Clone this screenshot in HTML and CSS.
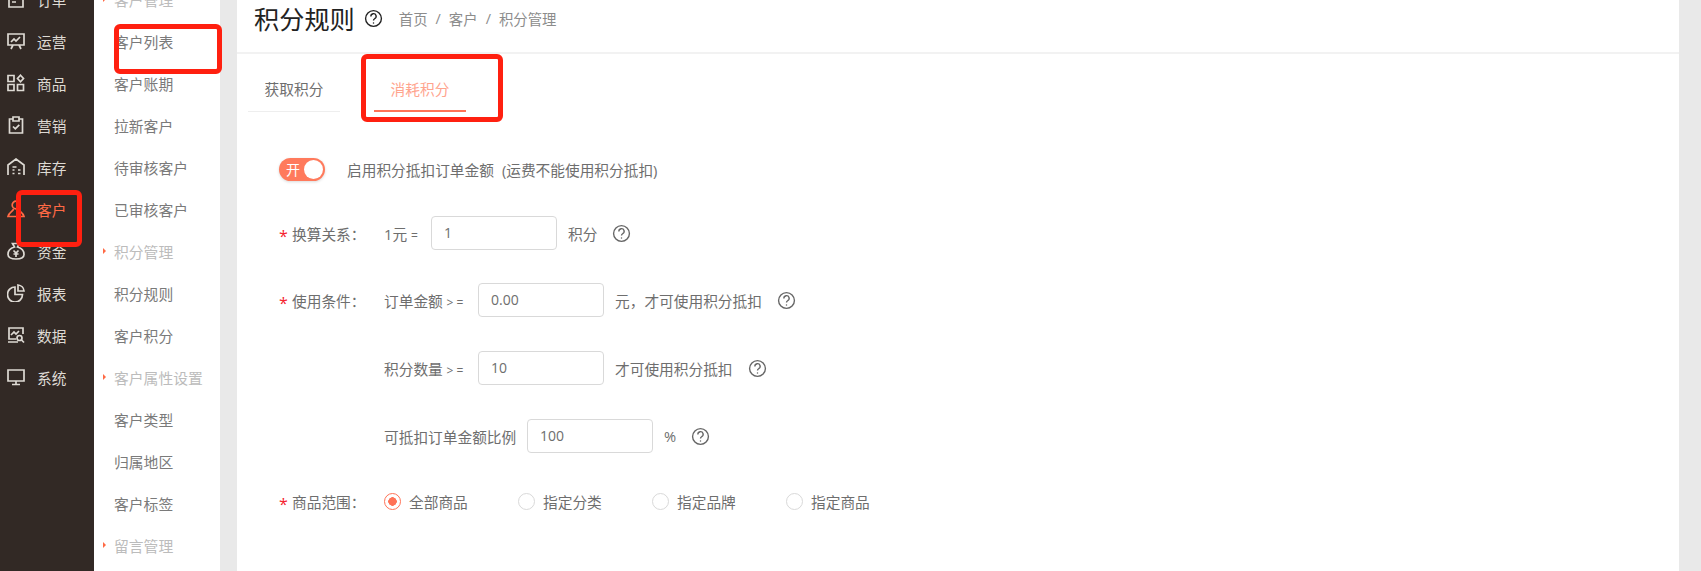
FILE: index.html
```html
<!DOCTYPE html>
<html lang="zh">
<head>
<meta charset="utf-8">
<title>积分规则</title>
<link rel="stylesheet" href="styles.css">
</head>
<body>
<div class="app">
  <nav class="rail">
    <a class="rail-item"><svg class="ri" viewBox="0 0 18 18"><path d="M2 1h12l2 2v14H2zM5 6h8M5 9h8M5 12h4"/></svg><span>订单</span></a>
    <a class="rail-item"><svg class="ri" viewBox="0 0 18 18"><path d="M1 2h16v11H1zM4 10l3-3 2 2 4-4M6 13l-2 4M12 13l2 4"/></svg><span>运营</span></a>
    <a class="rail-item"><svg class="ri" viewBox="0 0 18 18"><path d="M1 1.500h6v6H1zM1 10.500h6v6H1zM10.500 10.500h6v6h-6zM13.500 1.200l3 3.300-3 3.300-3-3.300z"/></svg><span>商品</span></a>
    <a class="rail-item"><svg class="ri" viewBox="0 0 18 18"><path d="M6 3H2.500v14h13V3H12M6 1h6v4H6zM6 10.500l2.300 2.300 4-4"/></svg><span>营销</span></a>
    <a class="rail-item"><svg class="ri" viewBox="0 0 18 18"><path d="M1 17V7l8-6 8 6v10M5.500 9h4M5.500 12h2M5.500 15.500h2M11 12h2.500M11 15.500h2.500"/></svg><span>库存</span></a>
    <a class="rail-item is-active"><svg class="ri" viewBox="0 0 18 18"><circle cx="9" cy="5" r="3.800"/><path d="M6.500 9C6 11.500 2 12 1 16.500h16C16 12 12 11.500 11.500 9"/></svg><span>客户</span></a>
    <a class="rail-item"><svg class="ri" viewBox="0 0 18 18"><path d="M5.500 1.500h7l-2 3.500c4 1 6.500 4 6.500 7.500 0 3-3 4.500-8 4.500s-8-1.500-8-4.500C1 9 3.500 6 7.500 5zM6.500 8.500L9 11l2.500-2.500M9 11v4M6.500 12h5"/></svg><span>资金</span></a>
    <a class="rail-item"><svg class="ri" viewBox="0 0 18 18"><path d="M8 3a7.500 7.500 0 1 0 7.500 7.500H8zM11 1a6.500 6.500 0 0 1 6 6h-6z"/></svg><span>报表</span></a>
    <a class="rail-item"><svg class="ri" viewBox="0 0 18 18"><path d="M16 8V2H2v11h7M1 16h10M4 9l3-3 2 2 3-3"/><circle cx="12.500" cy="12" r="2.500"/><path d="M14.500 14l2.500 2.500"/></svg><span>数据</span></a>
    <a class="rail-item"><svg class="ri" viewBox="0 0 18 18"><path d="M1 2h16v11H1zM9 13v3M5 16.500h8"/></svg><span>系统</span></a>
  </nav>

  <aside class="sub">
    <div class="sub-head">客户管理</div>
    <a class="sub-item">客户列表</a>
    <a class="sub-item">客户账期</a>
    <a class="sub-item">拉新客户</a>
    <a class="sub-item">待审核客户</a>
    <a class="sub-item">已审核客户</a>
    <div class="sub-head">积分管理</div>
    <a class="sub-item">积分规则</a>
    <a class="sub-item">客户积分</a>
    <div class="sub-head">客户属性设置</div>
    <a class="sub-item">客户类型</a>
    <a class="sub-item">归属地区</a>
    <a class="sub-item">客户标签</a>
    <div class="sub-head">留言管理</div>
  </aside>

  <main class="panel">
    <header class="head">
      <h1 class="title">积分规则</h1>
      <svg class="help help-dark" viewBox="0 0 18 18"><circle cx="9" cy="9" r="7.500"/><path d="M6.500 7a2.500 2.500 0 1 1 3.600 2.200C9.300 9.700 9 10 9 11"/><circle class="dot" cx="9" cy="13.200" r="0.700"/></svg>
      <div class="crumbs"><span>首页</span><i>/</i><span>客户</span><i>/</i><span>积分管理</span></div>
    </header>

    <div class="tabs">
      <a class="tab">获取积分</a>
      <a class="tab is-on">消耗积分</a>
    </div>

    <form class="form">
      <div class="row row-toggle">
        <span class="switch"><b>开</b><i></i></span>
        <span class="switch-text">启用积分抵扣订单金额<span class="note">(运费不能使用积分抵扣)</span></span>
      </div>

      <div class="row row-rate">
        <label class="lbl"><em>*</em>换算关系：</label>
        <span class="pre pre-rate">1元 <small>=</small></span>
        <span class="input">1</span>
        <span class="post">积分</span>
        <svg class="help" viewBox="0 0 18 18"><circle cx="9" cy="9" r="7.500"/><path d="M6.500 7a2.500 2.500 0 1 1 3.600 2.200C9.300 9.700 9 10 9 11"/><circle class="dot" cx="9" cy="13.200" r="0.700"/></svg>
      </div>

      <div class="row row-use">
        <label class="lbl"><em>*</em>使用条件：</label>
        <span class="pre pre-cond">订单金额 <small>&gt; =</small></span>
        <span class="input">0.00</span>
        <span class="post">元，才可使用积分抵扣</span>
        <svg class="help" viewBox="0 0 18 18"><circle cx="9" cy="9" r="7.500"/><path d="M6.500 7a2.500 2.500 0 1 1 3.600 2.200C9.300 9.700 9 10 9 11"/><circle class="dot" cx="9" cy="13.200" r="0.700"/></svg>
      </div>

      <div class="row row-next">
        <span class="lbl"></span>
        <span class="pre pre-cond">积分数量 <small>&gt; =</small></span>
        <span class="input">10</span>
        <span class="post">才可使用积分抵扣</span>
        <svg class="help" viewBox="0 0 18 18"><circle cx="9" cy="9" r="7.500"/><path d="M6.500 7a2.500 2.500 0 1 1 3.600 2.200C9.300 9.700 9 10 9 11"/><circle class="dot" cx="9" cy="13.200" r="0.700"/></svg>
      </div>

      <div class="row row-next">
        <span class="lbl"></span>
        <span class="pre pre-ratio">可抵扣订单金额比例</span>
        <span class="input">100</span>
        <span class="post">%</span>
        <svg class="help" viewBox="0 0 18 18"><circle cx="9" cy="9" r="7.500"/><path d="M6.500 7a2.500 2.500 0 1 1 3.600 2.200C9.300 9.700 9 10 9 11"/><circle class="dot" cx="9" cy="13.200" r="0.700"/></svg>
      </div>

      <div class="row row-scope">
        <label class="lbl"><em>*</em>商品范围：</label>
        <span class="radio is-on"><i></i>全部商品</span>
        <span class="radio"><i></i>指定分类</span>
        <span class="radio"><i></i>指定品牌</span>
        <span class="radio"><i></i>指定商品</span>
      </div>
    </form>
  </main>
</div>

<div class="mark mark-list"></div>
<div class="mark mark-cust"></div>
<div class="mark mark-tab"></div>
</body>
</html>
```

FILE: styles.css
```css
* { box-sizing: border-box; }
html, body { margin: 0; height: 571px; overflow: hidden; }
body {
  background: #e9e9e9;
  font-family: "Open Sans", "Noto Sans CJK SC", sans-serif;
  font-size: 14.7px;
  color: #6e6e6e;
}
.app { display: flex; height: 571px; overflow: hidden; }

.rail { width: 94px; flex: none; background: #322925; }
.rail-item {
  display: flex; align-items: center; height: 42px; padding-left: 7px;
  color: #dedad4;
}
.rail-item:first-child { margin-top: -22px; }
.rail-item span { margin-left: 12px; }
.rail-item.is-active { color: #ff6a45; }
.ri { width: 18px; height: 18px; fill: none; stroke: currentColor; stroke-width: 1.7; flex: none; }

.sub { width: 126px; flex: none; background: #fff; font-size: 14.8px; }
.sub-item, .sub-head { display: flex; align-items: center; height: 42px; padding-left: 20px; }
.sub-item { color: #7a7a7a; }
.sub-head { color: #bcbcbc; position: relative; }
.sub-head:first-child { margin-top: -22px; }
.sub-head::before {
  content: ""; position: absolute; left: 9px; top: 18px;
  border-left: 3px solid #ff6a45; border-top: 3px solid transparent; border-bottom: 3px solid transparent;
}

.panel { width: 1442px; flex: none; margin-left: 17px; background: #fff; height: 571px; }
.head { display: flex; align-items: center; height: 54px; padding: 0 0 15px 17px; border-bottom: 2px solid #f2f2f2; }
.title { margin: 0; font-size: 25.2px; font-weight: 400; color: #222; line-height: 40px; }
.head .help { margin-left: 9px; }
.crumbs { margin-left: 16px; font-size: 14.4px; color: #8c8c8c; display: flex; align-items: center; }
.crumbs i { font-style: normal; margin: 0 8px; }

.help { width: 19px; height: 19px; fill: none; stroke: #666; stroke-width: 1.300; flex: none; }
.help-dark { stroke: #222; }
.help .dot { fill: #666; stroke: none; }
.help-dark .dot { fill: #222; }

.tabs { display: flex; padding-left: 11px; height: 58px; gap: 34px; }
.tab {
  width: 92px; height: 58px; display: flex; align-items: center; justify-content: center;
  padding-top: 12px; border-bottom: 1px solid #eee; color: #6e6e6e;
}
.tab.is-on { color: #ffa48e; border-bottom: 2px solid #ff7256; }

.form { padding-left: 42px; }
.row { display: flex; align-items: center; height: 34px; }
.row-toggle { margin-top: 40px; }
.row-rate { margin-top: 30px; }
.row-use { margin-top: 33px; }
.row-next { margin-top: 34px; }
.row-scope { margin-top: 31px; }

.switch {
  position: relative; width: 46px; height: 23px; border-radius: 12px; background: #ff7a5c;
  color: #fff; font-size: 14px; line-height: 23px; padding-left: 7px; box-shadow: 0 1px 3px rgba(0,0,0,.15);
}
.switch b { font-weight: 400; }
.switch i {
  position: absolute; right: 2px; top: 2px; width: 19px; height: 19px; border-radius: 50%; background: #fff;
}
.switch-text { margin-left: 22px; }
.note { margin-left: 8px; }

.lbl { width: 105px; flex: none; display: flex; align-items: center; }
.lbl em { color: #f5222d; font-style: normal; width: 13px; font-size: 16px; line-height: 14px; padding-top: 5px; }
.pre { display: block; flex: none; }
.pre small { font-size: 12px; }
.pre-rate { width: 47px; }
.pre-cond { width: 94px; }
.pre-ratio { width: 143px; }
.input {
  width: 126px; height: 34px; border: 1px solid #d9d9d9; border-radius: 4px; background: #fff;
  padding-left: 12px; line-height: 31px; font-size: 14px; color: #6e6e6e; flex: none;
}
.post { margin-left: 11px; margin-right: 15px; }

.radio { display: flex; align-items: center; width: 134px; }
.radio i {
  width: 17px; height: 17px; border-radius: 50%; border: 1px solid #d9d9d9; margin-right: 8px; flex: none;
}
.radio.is-on i { border-color: #ff7256; background: radial-gradient(circle, #ff7256 0 4px, #fff 4.500px); }

.mark { position: absolute; border: 5px solid #ff2010; border-radius: 6px; }
.mark-list { left: 114px; top: 24px; width: 108px; height: 50px; }
.mark-cust { left: 16px; top: 190px; width: 66px; height: 57px; }
.mark-tab { left: 361px; top: 54px; width: 142px; height: 68px; }
```
